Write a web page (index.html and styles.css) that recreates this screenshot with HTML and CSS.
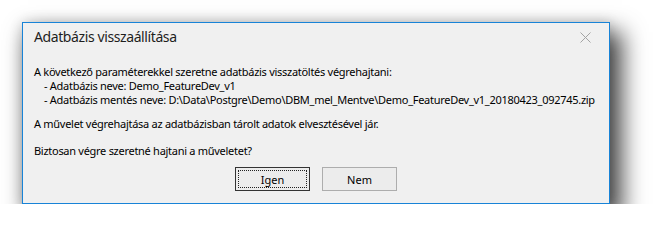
FILE: index.html
```html
<!DOCTYPE html>
<html lang="hu">
<head>
<meta charset="UTF-8" />
<title>Adatbázis visszaállítása</title>
<link rel="stylesheet" href="styles.css">
</head>
<body>
<div class="dialog">
    <div class="dialog-head">
        <span class="dialog-title">Adatbázis visszaállítása</span>
        <svg class="close" width="11" height="11" viewBox="0 0 11 11">
            <path d="M0.5 0.5 L10.5 10.5 M10.5 0.5 L0.5 10.5" stroke="#a3a3a3" stroke-width="1" fill="none"/>
        </svg>
    </div>
    <div class="dialog-body">
        <p class="msg">A következő paraméterekkel szeretne adatbázis visszatöltés végrehajtani:</p>
        <p class="msg indent">- Adatbázis neve: Demo_FeatureDev_v1</p>
        <p class="msg indent">- Adatbázis mentés neve: D:\Data\Postgre\Demo\DBM_mel_Mentve\Demo_FeatureDev_v1_20180423_092745.zip</p>
        <p class="msg warn">A művelet végrehajtása az adatbázisban tárolt adatok elvesztésével jár.</p>
        <p class="msg ask">Biztosan végre szeretné hajtani a műveletet?</p>
    </div>
    <div class="buttons">
        <button class="btn default"><span>Igen</span></button>
        <button class="btn">Nem</button>
    </div>
</div>
</body>
</html>
```

FILE: styles.css
```css
body {
margin: 0;
padding: 22px 0 0 22px;
background: #fff;
font-family: "Noto Sans", "Open Sans", sans-serif;
}
.dialog {
width: 588px;
height: 182px;
box-sizing: border-box;
border: 1px solid #1883d7;
background: #f0f0f0;
box-shadow: 9px 13px 22px 3px rgba(0,0,0,0.72), 0 0 12px rgba(0,0,0,0.14);
display: flex;
flex-direction: column;
}
.dialog-head {
display: flex;
justify-content: space-between;
align-items: center;
padding: 5px 18px 0 11px;
height: 18px;
}
.dialog-title {
font-size: 14px;
letter-spacing: -0.4px;
line-height: 18px;
color: #1e1e1e;
}
.dialog-body {
padding: 19px 11px 0 11px;
}
.msg {
margin: 0;
font-size: 11px;
letter-spacing: -0.28px;
line-height: 14px;
color: #000;
white-space: nowrap;
}
.indent {
padding-left: 10px;
}
.warn {
margin-top: 10px;
}
.ask {
margin-top: 13px;
}
.buttons {
display: flex;
justify-content: center;
gap: 12px;
margin-top: 9px;
}
.btn {
width: 75px;
height: 24px;
padding: 0;
font-family: inherit;
font-size: 11px;
color: #000;
background: #ececec;
border: 1px solid #adadad;
}
.btn.default {
border-color: #333;
padding: 2px;
}
.btn.default span {
display: flex;
align-items: center;
justify-content: center;
height: 100%;
box-sizing: border-box;
border: 1px dotted #222;
}
```
